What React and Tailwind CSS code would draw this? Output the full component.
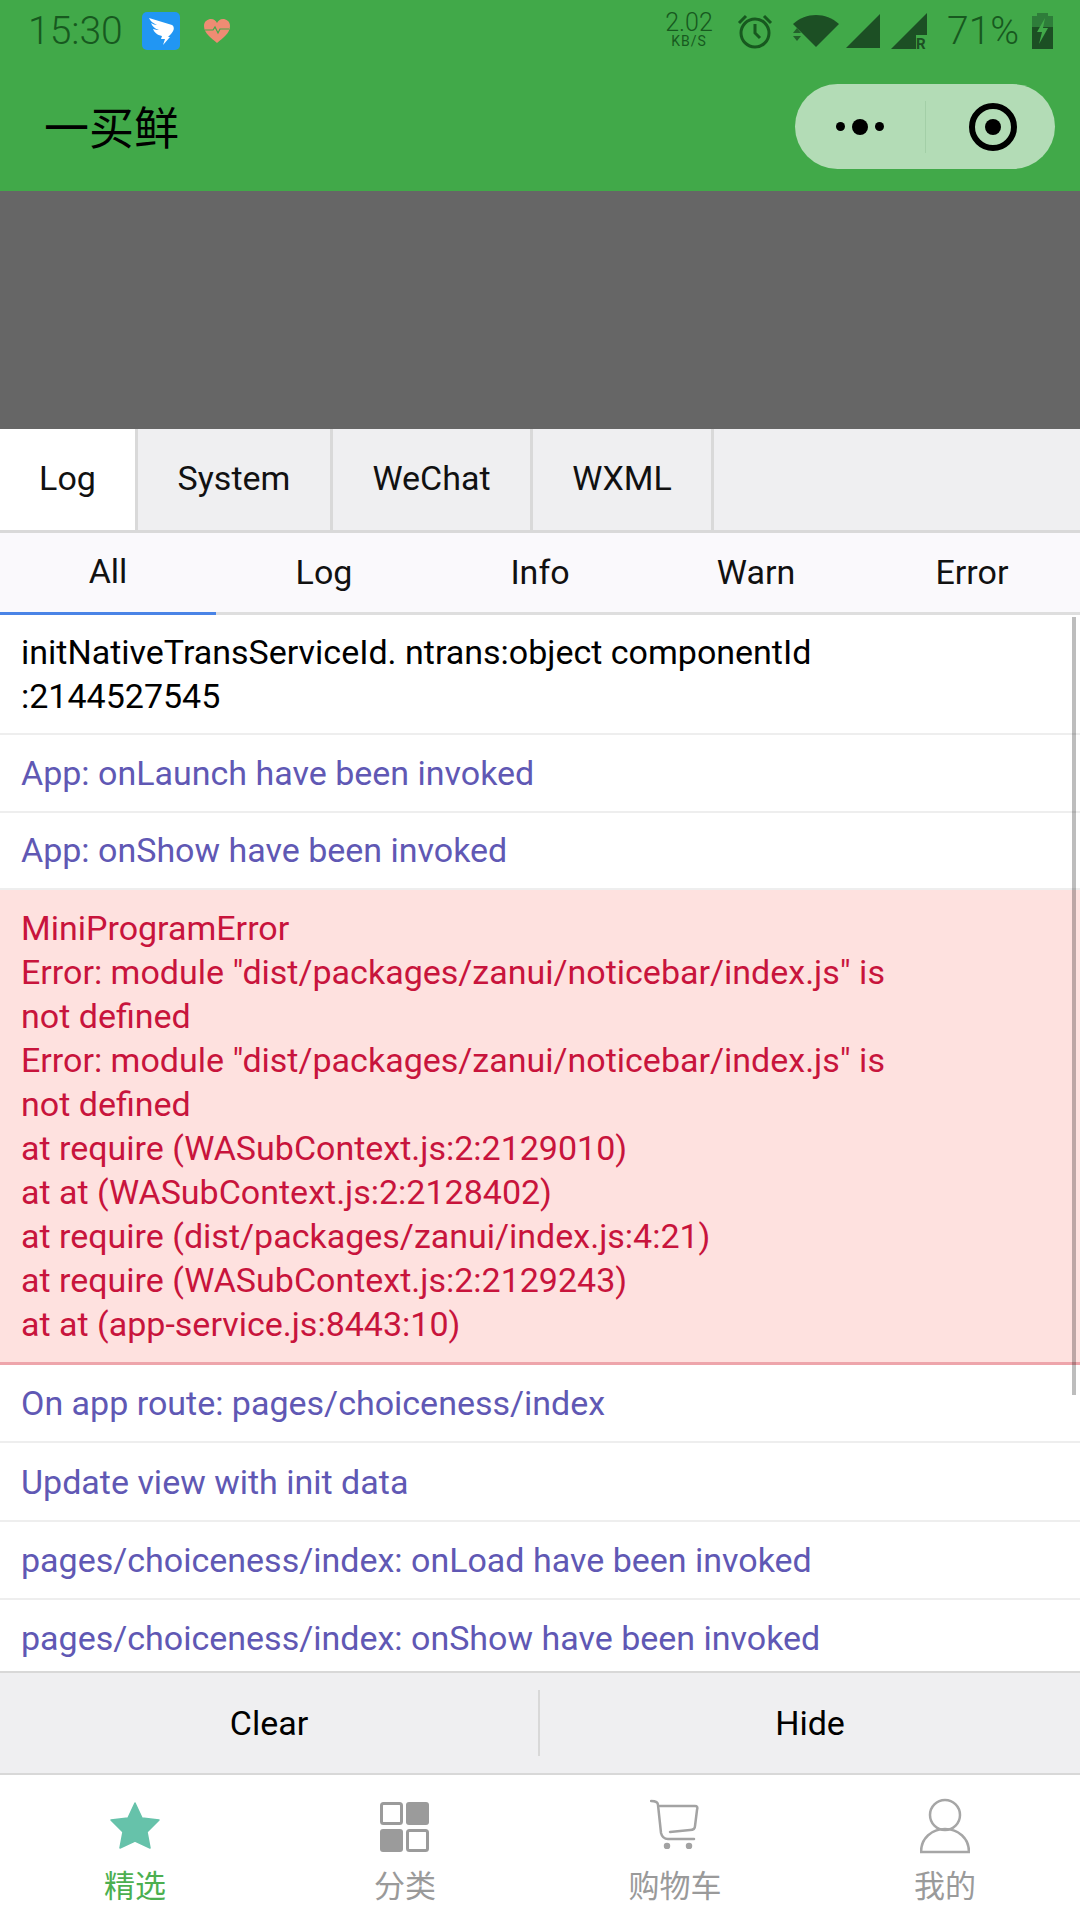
import React from "react";

const FONT = "[font-family:Roboto,'Noto_Sans_CJK_SC',sans-serif]";

function Dingtalk() {
  return (
    <svg width="38" height="38" viewBox="0 0 38 38">
      <rect width="38" height="38" rx="5" fill="#2196f3" />
      <path d="M7 6 L30 13 C33 15 32 19 29 22 L26 25 L28 25 L21 33 L23 27 L19 27 L20 24 C15 23 12 20 11 17 C14 18 16 18 17 18 C13 17 10 14 9 11 C11 12 13 13 15 13 C11 11 8 9 7 6 Z" fill="#fff" />
    </svg>
  );
}

function Heart() {
  return (
    <svg width="28" height="26" viewBox="0 0 28 26">
      <path d="M14 25 C8 20 1 15 1 8 C1 3 5 1 8 1 C11 1 13 3 14 5 C15 3 17 1 20 1 C23 1 27 3 27 8 C27 15 20 20 14 25 Z" fill="#ef8c73" />
      <path d="M2 12 H10 L12 9 L15 15 L17 11 H26" fill="none" stroke="#41a949" strokeWidth="1.2" />
    </svg>
  );
}

function StatusBar() {
  return (
    <div className="flex h-[60px] items-center justify-between pl-[28px] pr-[27px] pt-[2px] text-[#17591f]">
      <div className="flex items-center">
        <span className="w-[114px] text-[39px] font-light leading-none">15:30</span>
        <Dingtalk />
        <span className="ml-[23px] flex"><Heart /></span>
      </div>
      <div className="flex items-center">
        <div className="mr-[24px] flex h-[40px] w-[48px] flex-col items-center">
          <span className="text-[25px] leading-[23px] font-light">2.02</span>
          <span className="text-[14px] leading-[14px] tracking-[1px]">KB/S</span>
        </div>
        <svg width="36" height="36" viewBox="0 0 36 36" fill="none" stroke="#17591f" strokeWidth="3">
          <circle cx="18" cy="20" r="14" />
          <path d="M18 11 V20 L23 25 M2 10 L9 3 M34 10 L27 3" />
        </svg>
        <svg className="ml-[19px]" width="48" height="34" viewBox="0 0 48 34">
          <path d="M1 10 C14 -2 34 -2 47 10 L24 33 Z" fill="#1c4f24" />
          <path d="M1 19 L5 14 L9 19 Z M1 22 H9 L5 27 Z" fill="#1c4f24" opacity="0.8" />
        </svg>
        <svg className="ml-[6px]" width="34" height="34" viewBox="0 0 34 34">
          <path d="M0 34 L34 0 V34 Z" fill="#1c4f24" />
        </svg>
        <svg className="ml-[11px]" width="37" height="36" viewBox="0 0 37 36">
          <path d="M0 36 L36 0 V22 H25 V36 Z" fill="#1c4f24" />
          <text x="25" y="36" fontSize="15" fontWeight="700" fill="#1c4f24" fontFamily="Roboto, sans-serif">R</text>
        </svg>
        <span className="ml-[19px] w-[85px] text-[39px] font-light leading-none">71%</span>
        <svg width="21" height="36" viewBox="0 0 21 36">
          <rect x="5" y="0" width="11" height="4" fill="#2e7d3a" />
          <rect x="0" y="3" width="21" height="11" fill="#2e7d3a" />
          <rect x="0" y="14" width="21" height="22" fill="#1c4f24" />
          <path d="M13 5 L5 19 H10 L7 31 L16 15 H11 Z" fill="#41a949" />
        </svg>
      </div>
    </div>
  );
}

function NavBar() {
  return (
    <div className="flex h-[131px] items-start justify-between bg-[#41a949] pl-[44px] pr-[25px] pt-[24px]">
      <span className="pt-[18px] text-[45px] leading-[55px] text-black">一买鲜</span>
      <div className="flex h-[85px] w-[260px] items-center rounded-[43px] bg-[#b3dcb6]">
        <div className="flex w-[130px] items-center justify-center gap-[7px]">
          <span className="h-[9px] w-[9px] rounded-full bg-black" />
          <span className="h-[16px] w-[16px] rounded-full bg-black" />
          <span className="h-[9px] w-[9px] rounded-full bg-black" />
        </div>
        <span className="h-[52px] w-px bg-[#a3cfa7]" />
        <div className="flex flex-1 items-center justify-center pl-[4px]">
          <span className="flex h-[48px] w-[48px] items-center justify-center rounded-full border-[6px] border-black">
            <span className="h-[16px] w-[16px] rounded-full bg-black" />
          </span>
        </div>
      </div>
    </div>
  );
}

function TopTab({ label, active, width }) {
  return (
    <div className={`flex h-full items-center justify-center border-r-[3px] border-[#d9d9d9] pb-[2px] text-[34px] text-[#111] ${active ? "bg-white" : ""} ${width}`}>
      {label}
    </div>
  );
}

function Row({ children, pad }) {
  return <div className={`border-b-2 border-[#eeeeee] px-[21px] text-[#6058b4] ${pad}`}>{children}</div>;
}

const errorLines = [
  "MiniProgramError",
  'Error: module "dist/packages/zanui/noticebar/index.js" is',
  "not defined",
  'Error: module "dist/packages/zanui/noticebar/index.js" is',
  "not defined",
  "at require (WASubContext.js:2:2129010)",
  "at at (WASubContext.js:2:2128402)",
  "at require (dist/packages/zanui/index.js:4:21)",
  "at require (WASubContext.js:2:2129243)",
  "at at (app-service.js:8443:10)",
];

function Console() {
  return (
    <div className="flex flex-1 flex-col overflow-hidden bg-white">
      <div className="flex h-[104px] border-b-[3px] border-[#d9d9d9] bg-[#efeff1]">
        <TopTab label="Log" active width="w-[138px]" />
        <TopTab label="System" width="w-[195px]" />
        <TopTab label="WeChat" width="w-[200px]" />
        <TopTab label="WXML" width="w-[181px]" />
      </div>
      <div className="flex h-[82px] border-b-[3px] border-[#dedede] bg-[#faf9fc] text-[34px] text-[#111]">
        {["All", "Log", "Info", "Warn", "Error"].map((t, i) => (
          <div key={t} className={`-mb-[3px] flex w-1/5 items-center justify-center pb-[3px] ${i === 0 ? "border-b-[3px] border-[#4a84e6]" : ""}`}>
            {t}
          </div>
        ))}
      </div>
      <div className="relative flex-1 overflow-hidden text-[34px] leading-[44px]">
        <span className="absolute right-[4px] top-[2px] h-[778px] w-[4px] bg-[#00000042]" />
        <div className="border-b-2 border-[#eeeeee] px-[21px] py-[15px] text-black">
          <div>initNativeTransServiceId. ntrans:object componentId</div>
          <div>:2144527545</div>
        </div>
        <Row pad="py-[15.75px]">App: onLaunch have been invoked</Row>
        <Row pad="py-[15.75px]">App: onShow have been invoked</Row>
        <div className="border-b-[3px] border-[#eea5ab] bg-[#fee1df] px-[21px] py-[16px] text-[#c8143c]">
          {errorLines.map((l, i) => <div key={i}>{l}</div>)}
        </div>
        <Row pad="py-[16.2px]">On app route: pages/choiceness/index</Row>
        <Row pad="py-[16.2px]">Update view with init data</Row>
        <Row pad="py-[16.2px]">pages/choiceness/index: onLoad have been invoked</Row>
        <Row pad="py-[16.2px]">pages/choiceness/index: onShow have been invoked</Row>
      </div>
      <div className="flex h-[104px] items-center border-y-2 border-[#d8d8d8] bg-[#efeff1] text-[34px] text-black">
        <div className="flex h-[66px] w-[538px] items-center justify-center">Clear</div>
        <div className="flex h-[66px] flex-1 items-center justify-center border-l-2 border-[#d8d8d8]">Hide</div>
      </div>
    </div>
  );
}

function BottomItem({ icon, label, active }) {
  return (
    <div className="flex w-1/4 flex-col items-center">
      <div className="flex h-[68px] items-end justify-center">{icon}</div>
      <span className={`mt-[12px] text-[31px] leading-[36px] ${active ? "text-[#4caf50]" : "text-[#9a9a9a]"}`}>{label}</span>
    </div>
  );
}

function BottomBar() {
  return (
    <div className="flex h-[145px] bg-white pt-[14px]">
      <BottomItem
        active
        label="精选"
        icon={
          <svg width="50" height="48" viewBox="0 0 50 48" className="mb-[7px]">
            <path d="M25 1 L32 16 L49 18 L37 30 L40 46 L25 39 L10 46 L13 30 L1 18 L18 16 Z" fill="#66c2aa" stroke="#66c2aa" strokeWidth="1.5" strokeLinejoin="round" />
          </svg>
        }
      />
      <BottomItem
        label="分类"
        icon={
          <svg width="50" height="50" viewBox="0 0 50 50" className="mb-[5px]">
            <rect x="1.5" y="1.5" width="20" height="20" rx="2" fill="none" stroke="#9b9b9b" strokeWidth="3" />
            <rect x="26" y="0" width="23" height="23" rx="3" fill="#9b9b9b" />
            <rect x="0" y="27" width="23" height="23" rx="3" fill="#9b9b9b" />
            <rect x="27.5" y="28.5" width="20" height="20" rx="2" fill="none" stroke="#9b9b9b" strokeWidth="3" />
          </svg>
        }
      />
      <BottomItem
        label="购物车"
        icon={
          <svg width="50" height="50" viewBox="0 0 50 50" fill="none" stroke="#a3a3a3" strokeWidth="2.5" strokeLinecap="round" className="mb-[8px]">
            <path d="M1 2 C6 2 8 3 8 6 L11 34 C12 38 14 40 18 40 H44" />
            <path d="M10 7 H45 C47 7 48 8 47 11 L45 27 C45 30 43 31 40 31 L20 33" />
            <circle cx="17" cy="47" r="2" fill="#a3a3a3" />
            <circle cx="39" cy="47" r="2" fill="#a3a3a3" />
          </svg>
        }
      />
      <BottomItem
        label="我的"
        icon={
          <svg width="50" height="56" viewBox="0 0 50 56" fill="none" stroke="#a6a6a6" strokeWidth="2.5" className="mb-[3px]">
            <circle cx="25" cy="17" r="15" />
            <path d="M1 54 C1 40 12 31 25 31 C38 31 49 40 49 54 Z" />
          </svg>
        }
      />
    </div>
  );
}

export default function App() {
  return (
    <div className={`flex h-[1920px] w-[1080px] flex-col overflow-hidden bg-white ${FONT}`}>
      <div className="bg-[#41a949]"><StatusBar /></div>
      <NavBar />
      <div className="h-[238px] bg-[#666666]" />
      <Console />
      <BottomBar />
    </div>
  );
}
